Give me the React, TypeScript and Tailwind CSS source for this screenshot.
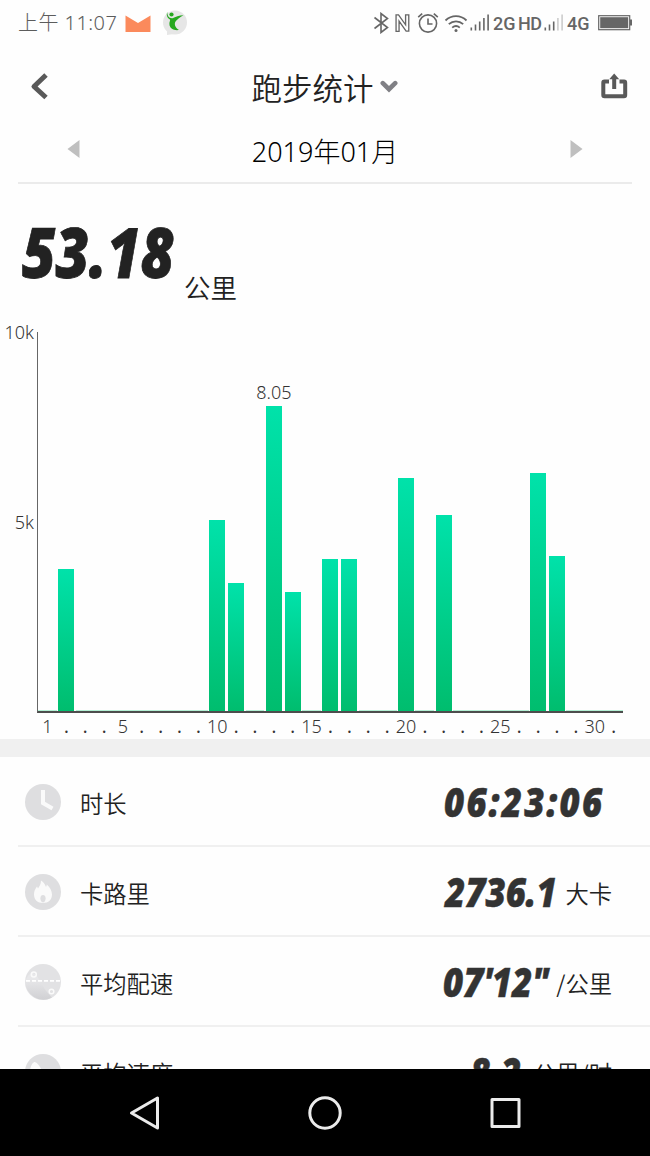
import type { ReactNode } from 'react'

const MAX_KM = 10

const runs: Record<number, number> = {
  2: 3.76,
  10: 5.03,
  11: 3.39,
  13: 8.05,
  14: 3.14,
  16: 4.0,
  17: 4.01,
  20: 6.16,
  22: 5.17,
  27: 6.27,
  28: 4.08,
}

const days = Array.from({ length: 31 }, (_, i) => i + 1)
const best = Math.max(...Object.values(runs))

function Signal({ active }: { active: number }) {
  return (
    <svg width="20" height="18" viewBox="0 0 20 18" className="shrink-0">
      {[3, 6, 9, 12.5, 16].map((h, i) => (
        <rect
          key={h}
          x={0.5 + i * 4.2}
          y={16.5 - h}
          width="1.6"
          height={h}
          fill={i < active ? '#666' : '#ccc'}
        />
      ))}
    </svg>
  )
}

function StatusBar() {
  return (
    <div className="flex h-[46px] items-center pl-[18px] text-[#5c5c5c]">
      <span className="w-[107px] whitespace-nowrap font-['Noto_Sans','Noto_Sans_CJK_SC',sans-serif] text-[20px] font-light tracking-[0.45px]">
        上午 11:07
      </span>
      {/* 邮件 */}
      <svg width="26" height="18" viewBox="0 0 26 18" className="mt-0.5">
        <path d="M0.5 0.5L13 8L25.5 0.5V17H0.5Z" fill="#fb8a5c" />
      </svg>
      {/* 运动应用通知 */}
      <svg width="26" height="26" viewBox="0 0 26 26" className="ml-[11px]">
        <circle cx="13" cy="12.5" r="12" fill="#e6e6e6" />
        <path d="M5 21L5 25L12 24Z" fill="#e6e6e6" />
        <circle cx="9.5" cy="4.5" r="2.1" fill="#26a81f" />
        <path
          d="M5.2 2C5.4 6 7 8.5 10.5 8.2C13.5 7 17 5.2 21.5 5.2C18 7 14.7 9.8 13.2 12C12 15 14 18.3 17 20C12 20.8 7.5 18.5 7.4 14C7.3 11.5 8.5 10.5 8 9.5C5.5 8 4 5.5 5.2 2Z"
          fill="#26a81f"
        />
      </svg>
      <div className="ml-[185px] flex items-center text-[#666]">
        {/* 蓝牙 */}
        <svg width="17" height="22" viewBox="0 0 17 22" fill="none" stroke="#666" strokeWidth="1.6">
          <path d="M1.5 5.5L14.5 15.5L8 20.5V1.5L14.5 6.5L1.5 16.5" />
        </svg>
        {/* NFC */}
        <svg width="15" height="22" viewBox="0 0 17 22" fill="none" stroke="#666" strokeWidth="1.5" className="ml-[5px]">
          <path d="M4.6 20.5H1.2V1.8H4L12 13V1.8H15.6V20.2H12.6L4.6 8.8Z" />
        </svg>
        {/* 闹钟 */}
        <svg width="22" height="22" viewBox="0 0 22 22" fill="none" stroke="#666" strokeWidth="1.6" className="ml-[7px]">
          <circle cx="11" cy="11.5" r="8.6" />
          <path d="M11 6.5V12H15.5M1.2 5.2L5.2 1.6M20.8 5.2L16.8 1.6" />
        </svg>
        {/* WiFi */}
        <svg width="24" height="19" viewBox="0 0 24 19" fill="none" stroke="#666" strokeWidth="1.8" className="ml-[5px]">
          <path d="M1.5 6.5C7.5 0.7 16.5 0.7 22.5 6.5M4.8 10.2C9 6.3 15 6.3 19.2 10.2M8.2 13.6C10.5 11.6 13.5 11.6 15.8 13.6" />
          <circle cx="12" cy="16.4" r="1.5" fill="#666" stroke="none" />
        </svg>
        <div className="ml-[2px]">
          <Signal active={5} />
        </div>
        <span className="ml-[3px] w-[25px] whitespace-nowrap font-['Roboto'] text-[18px] font-medium">2G</span>
        <span className="w-[26px] whitespace-nowrap font-['Roboto'] text-[18px] font-medium tracking-[-0.5px]">HD</span>
        <Signal active={3} />
        <span className="ml-[3px] w-[24px] whitespace-nowrap font-['Roboto'] text-[18px] font-medium">4G</span>
        <svg width="35" height="16" viewBox="0 0 35 16" className="ml-[7px]">
          <rect x="0.7" y="0.7" width="31" height="14" fill="none" stroke="#666" strokeWidth="1.2" />
          <rect x="2.2" y="2.2" width="28" height="11" fill="#666" />
          <rect x="32" y="4.5" width="2" height="6" fill="#666" />
        </svg>
      </div>
    </div>
  )
}

function TitleBar() {
  return (
    <div className="flex h-20 items-center justify-between pl-[30px] pr-[22px]">
      <svg width="20" height="28" viewBox="0 0 20 28" fill="none" stroke="#595959" strokeWidth="5" strokeLinejoin="round">
        <path d="M16 3L4 14.5L16 25.5" />
      </svg>
      <div className="mr-1.5 flex items-center pl-1">
        <h1 className="pt-0.5 text-[30.5px] leading-none font-[350] text-[#222]">跑步统计</h1>
        <svg width="18" height="14" viewBox="0 0 18 14" fill="none" stroke="#808085" strokeWidth="4.6" strokeLinecap="round" className="mt-0.5 ml-[6px]">
          <path d="M2.8 3.2L9 9.2L15.2 3.2" />
        </svg>
      </div>
      <svg width="27" height="26" viewBox="0 0 27 26" fill="none" stroke="#595959" strokeWidth="4">
        <path d="M8 8.5H3.5Q2.3 8.5 2.3 9.7V22Q2.3 23.2 3.5 23.2H23Q24.2 23.2 24.2 22V9.7Q24.2 8.5 23 8.5H18.5" />
        <path d="M13.2 16V5" />
        <path d="M8.2 6.3L13.2 0.5L18.2 6.3Z" fill="#595959" stroke="none" />
      </svg>
    </div>
  )
}

function MonthPicker() {
  return (
    <div className="mx-[18px] flex h-[58px] items-center justify-between border-b-2 border-[#ebebeb] px-[49px]">
      <svg width="13" height="20" viewBox="0 0 13 20" className="mb-[10px]">
        <path d="M12.5 1V19L0.5 10Z" fill="#bfbfbf" />
      </svg>
      <span className="mb-[6px] whitespace-nowrap font-['Noto_Sans','Noto_Sans_CJK_SC',sans-serif] text-[27px] leading-none font-light text-black">
        2019年01月
      </span>
      <svg width="13" height="20" viewBox="0 0 13 20" className="mb-[10px]">
        <path d="M0.5 1V19L12.5 10Z" fill="#bfbfbf" />
      </svg>
    </div>
  )
}

function Chart() {
  return (
    <div className="flex h-[407px] font-['Noto_Sans',sans-serif] text-[#333]">
      <div className="flex h-[380px] w-[37px] flex-col justify-between pr-[3px] text-right text-[18px] font-light">
        <span className="-mt-[9px] leading-[18px]">10k</span>
        <span className="leading-[18px]">5k</span>
        <span className="h-[9px]" />
      </div>
      <div className="w-[586px]">
        <div className="grid h-[381px] grid-cols-31 items-end border-b-2 border-l-[1.5px] border-b-[#4d4d4d] border-l-[#666]">
          {days.map((day) =>
            runs[day] ? (
              <div
                key={day}
                className="relative mx-auto w-4 bg-linear-to-b from-[#00e2aa] to-[#00bd6e]"
                style={{ height: `${(runs[day] / MAX_KM) * 100}%` }}
              >
                {runs[day] === best && (
                  <span className="absolute -top-[23px] left-1/2 -translate-x-1/2 text-[18px] leading-[18px] font-light">
                    {runs[day]}
                  </span>
                )}
              </div>
            ) : (
              <div key={day} className="h-px bg-[#b5f0d5]" />
            ),
          )}
        </div>
        <div className="grid grid-cols-31 pt-1 pl-px text-[18px] leading-[18px] font-light">
          {days.map((day) => (
            <span key={day} className="flex justify-center whitespace-nowrap">
              {day === 1 || day % 5 === 0 ? (
                <span className="-mx-2">{day}</span>
              ) : (
                <span className="font-normal">.</span>
              )}
            </span>
          ))}
        </div>
      </div>
    </div>
  )
}

function ClockIcon() {
  return (
    <svg width="36" height="36" viewBox="0 0 36 36" fill="none">
      <circle cx="18" cy="18" r="18" fill="#dedee0" />
      <path d="M18 6V19L27.5 24.5" stroke="#fafafa" strokeWidth="4" />
    </svg>
  )
}

function FlameIcon() {
  return (
    <svg width="36" height="36" viewBox="0 0 36 36">
      <circle cx="18" cy="18" r="18" fill="#dedee0" />
      <path
        d="M16 6.5C18.5 8 20 10 21 13C21.5 12.2 21.7 11.3 21.8 10.5C25 13.5 27 17 27 20.5C27 25.5 23.5 29 18 29C12.5 29 9 25.5 9 20.5C9 17.5 10 15 12 12.5L13 14.5C14.5 12 16 10 16 6.5Z"
        fill="#fafafa"
      />
      <path d="M18 21C19.8 21 20.6 22.5 20.6 24.3C20.6 26.3 19.8 28.5 18 28.5C16.2 28.5 15.4 26.3 15.4 24.3C15.4 22.5 16.2 21 18 21Z" fill="#dedee0" />
    </svg>
  )
}

function PaceIcon() {
  return (
    <svg width="36" height="36" viewBox="0 0 36 36">
      <defs>
        <linearGradient id="pace" x1="0" y1="0" x2="0" y2="1">
          <stop offset="0.2" stopColor="#e8e8ea" />
          <stop offset="1" stopColor="#d0d0d3" />
        </linearGradient>
      </defs>
      <circle cx="18" cy="18" r="18" fill="#e2e2e4" />
      <path d="M0.5 17C3 10 7 7 11 11C16 17 18 25 27 33.5A18 18 0 0 1 0.5 17Z" fill="url(#pace)" />
      <path d="M1 16.8H35" stroke="#fff" strokeWidth="1.8" strokeDasharray="4 2" />
      <circle cx="8.8" cy="10.5" r="2.5" fill="none" stroke="#fafafa" strokeWidth="1.5" />
      <circle cx="26.5" cy="27.5" r="2.3" fill="none" stroke="#fafafa" strokeWidth="1.5" />
    </svg>
  )
}

function SpeedIcon() {
  return (
    <svg width="36" height="36" viewBox="0 0 36 36">
      <circle cx="18" cy="18" r="18" fill="#dedee0" />
      <path d="M5 16C6 11 8 8 10 8C13 9 15 13 18 18L15 22Z" fill="#fafafa" />
    </svg>
  )
}

interface RowProps {
  icon: ReactNode
  label: string
  value: string
  unit?: string
  valueClass: string
}

function StatRow({ icon, label, value, unit, valueClass }: RowProps) {
  return (
    <div className="ml-[18px] flex h-[90px] shrink-0 items-center border-b-2 border-[#f0f0f0] pt-[2px] pr-[38px] pl-[7px] text-[#222]">
      {icon}
      <span className="ml-[19px] pt-[3px] text-[23.3px] leading-none font-[350]">{label}</span>
      <div className="ml-auto flex items-center">
        <span
          className={`-mt-[1px] flex whitespace-nowrap font-['Open_Sans'] text-[41px] leading-none font-extrabold text-[#333] italic [-webkit-text-stroke:0.5px_#333] ${valueClass}`}
        >
          <span className="origin-left scale-x-[0.85]">{value}</span>
        </span>
        {unit && <span className="pt-[3px] text-[23.3px] leading-none font-[350]">{unit}</span>}
      </div>
    </div>
  )
}

function NavBar() {
  return (
    <div className="flex h-[87px] shrink-0 items-center justify-between bg-black px-[128px]">
      <svg width="34" height="36" viewBox="0 0 34 36" fill="none" stroke="#ebebeb" strokeWidth="3" strokeLinejoin="round">
        <path d="M3.5 18L29.5 3V33Z" />
      </svg>
      <svg width="36" height="36" viewBox="0 0 36 36" fill="none" stroke="#ebebeb" strokeWidth="3">
        <circle cx="18" cy="18" r="15.2" />
      </svg>
      <svg width="34" height="36" viewBox="0 0 34 36" fill="none" stroke="#ebebeb" strokeWidth="3" strokeLinejoin="round">
        <rect x="4" y="4.5" width="27" height="27" />
      </svg>
    </div>
  )
}

export default function App() {
  return (
    <div className="flex h-[1156px] w-[650px] flex-col overflow-hidden bg-[#fefefe] font-['Noto_Sans_CJK_SC',sans-serif]">
      <StatusBar />
      <TitleBar />
      <MonthPicker />
      {/* 本月总里程 */}
      <div className="flex h-[148px] items-start pl-[22px] text-[#222]">
        <span className="mt-[33px] w-[162px] font-['Open_Sans'] text-[69px] leading-none font-extrabold italic [-webkit-text-stroke:0.8px_#222]">
          <span className="block origin-left scale-x-[0.84]">53.18</span>
        </span>
        <span className="mt-[90px] text-[26.5px] leading-none font-[350]">公里</span>
      </div>
      <Chart />
      <div className="h-[18px] shrink-0 bg-[#f0f0f0]" />
      {/* 明细列表，最后一行被导航栏截断 */}
      <div className="flex h-[312px] shrink-0 flex-col overflow-hidden">
        <StatRow icon={<ClockIcon />} label="时长" value="06:23:06" valueClass="w-[168px] tracking-[2.6px]" />
        <StatRow icon={<FlameIcon />} label="卡路里" value="2736.1" unit="大卡" valueClass="w-[120px]" />
        <StatRow icon={<PaceIcon />} label="平均配速" value={'07\'12"'} unit="/公里" valueClass="w-[113px]" />
        <StatRow icon={<SpeedIcon />} label="平均速度" value="8.2" unit="公里/时" valueClass="w-[63px]" />
      </div>
      <NavBar />
    </div>
  )
}
